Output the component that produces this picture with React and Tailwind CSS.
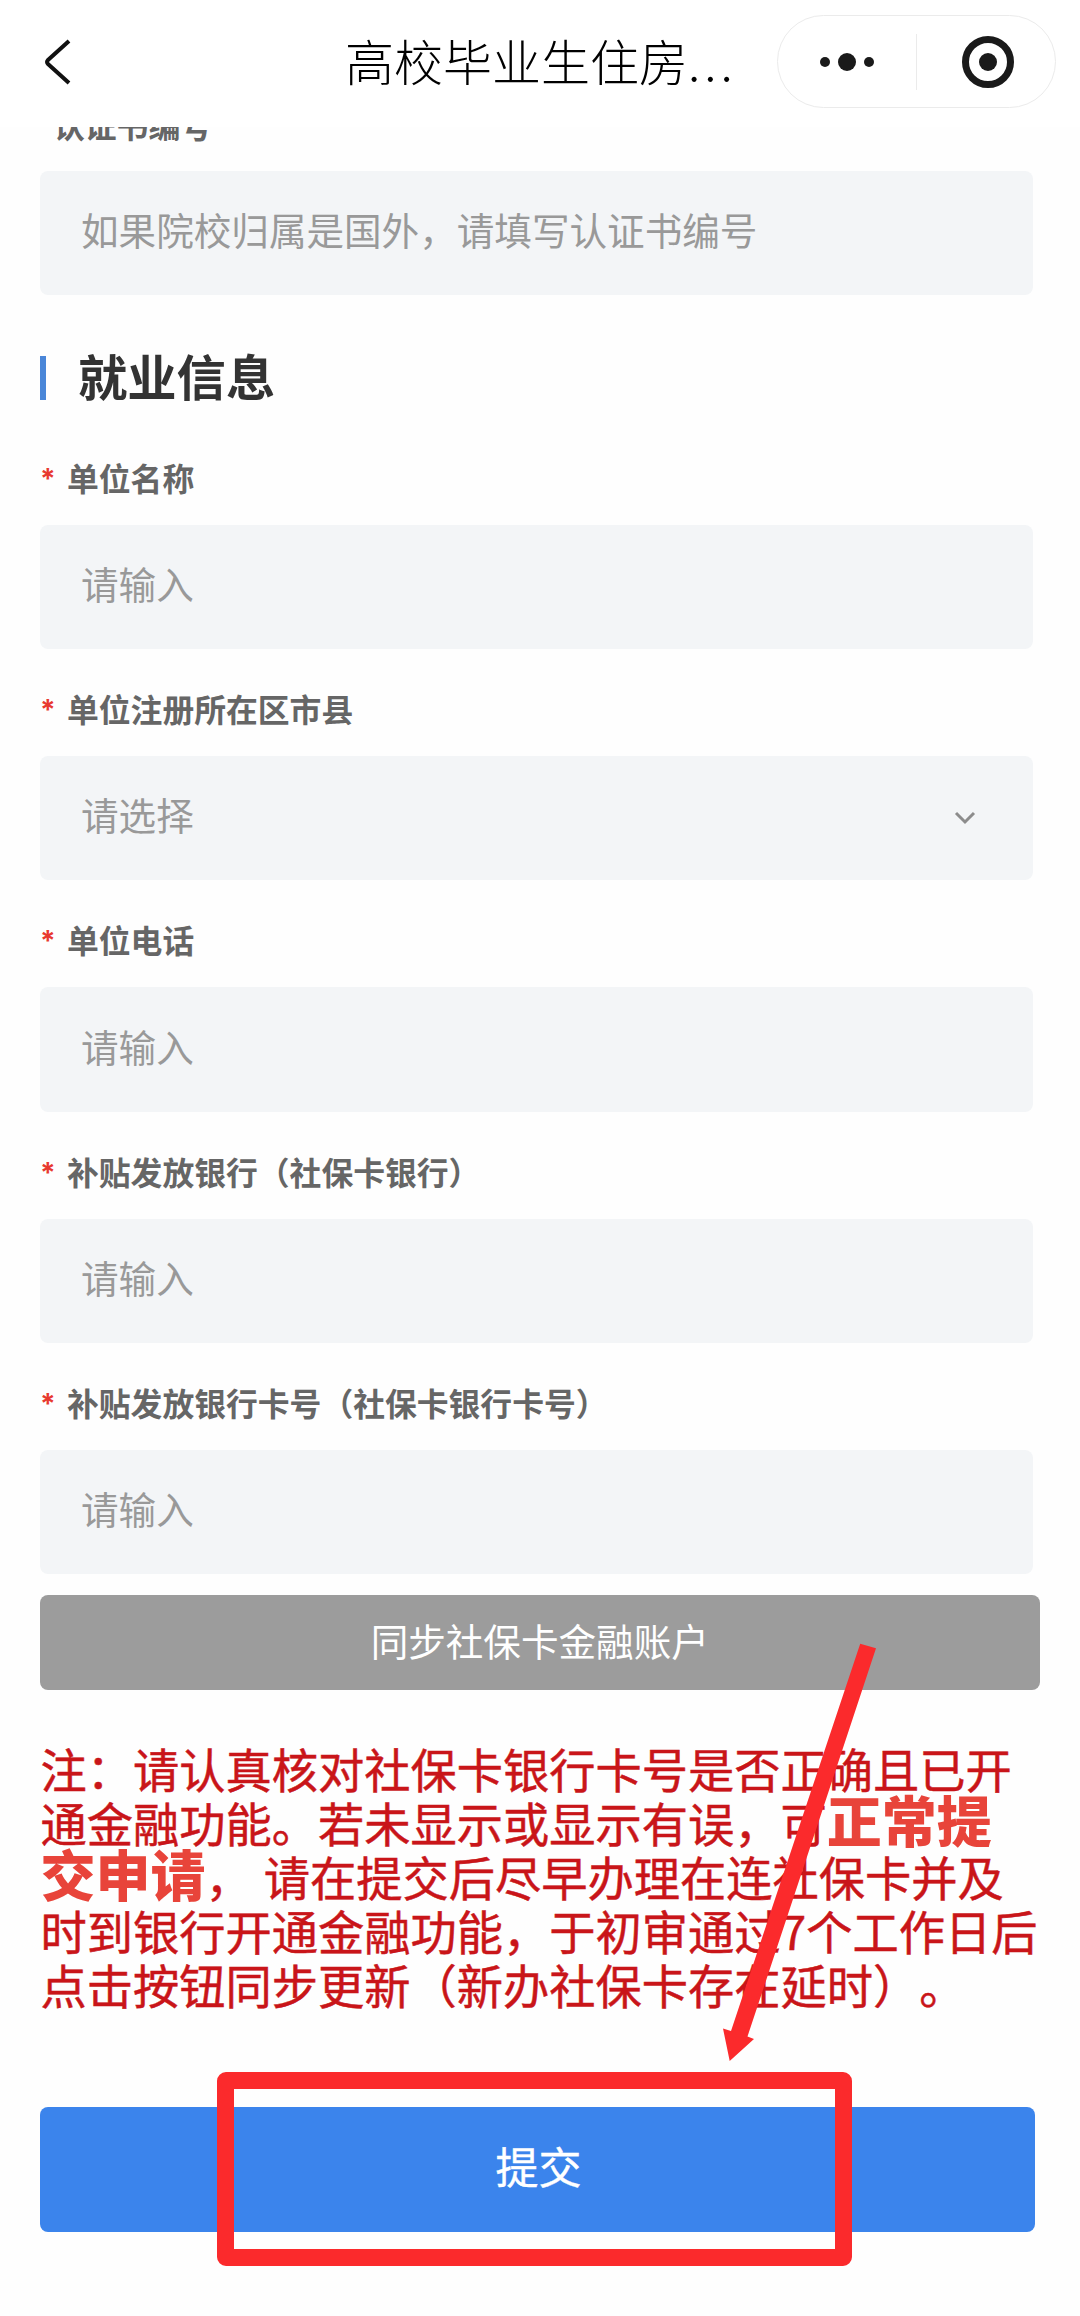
const fields = [
  { label: '单位名称', placeholder: '请输入' },
  { label: '单位注册所在区市县', placeholder: '请选择', select: true },
  { label: '单位电话', placeholder: '请输入' },
  { label: '补贴发放银行（社保卡银行）', placeholder: '请输入' },
  { label: '补贴发放银行卡号（社保卡银行卡号）', placeholder: '请输入' },
];

function NavBar() {
  return (
    <header className="flex h-[127px] shrink-0 items-start bg-white pl-[44px] pr-6">
      <svg className="mt-[38px] h-[48px] w-[28px]" viewBox="0 0 28 48" fill="none" stroke="#111" strokeWidth="4">
        <path d="M25 3 L4 22 Q2 24 4 26 L25 45" />
      </svg>
      <h1 className="ml-[273px] mt-[23px] w-[432px] whitespace-nowrap text-[49px] font-light leading-[74px] text-black">
        高校毕业生住房<span className="tracking-[4px]">...</span>
      </h1>
      <div className="mt-[15px] flex h-[93px] w-[279px] items-center rounded-full border border-[#ebebeb]">
        <div className="flex w-[138px] items-center justify-center gap-[8px]">
          <span className="size-[10px] rounded-full bg-[#1a1a1a]" />
          <span className="size-[18px] rounded-full bg-[#1a1a1a]" />
          <span className="size-[10px] rounded-full bg-[#1a1a1a]" />
        </div>
        <div className="h-[56px] w-px bg-[#ebebeb]" />
        <div className="flex flex-1 items-center justify-center pl-[4px]">
          <div className="flex size-[52px] items-center justify-center rounded-full border-[7px] border-[#1a1a1a]">
            <span className="size-[18px] rounded-full bg-[#1a1a1a]" />
          </div>
        </div>
      </div>
    </header>
  );
}

function InputBox({ placeholder, select }) {
  return (
    <div className="flex h-[124.3px] w-[992.5px] items-center justify-between rounded-lg bg-[#f3f5f7] pl-[41px] pr-[57px] text-[37.6px] leading-[56px] text-[#999]">
      <span className="-mt-[8px]">{placeholder}</span>
      {select && (
        <svg className="h-[14px] w-[22px]" viewBox="0 0 22 14" fill="none" stroke="#8c8c8c" strokeWidth="3">
          <path d="M2 2 L11 11 L20 2" />
        </svg>
      )}
    </div>
  );
}

function Field({ label, placeholder, select }) {
  return (
    <div>
      <div className="flex h-[107px] items-center pt-[11px] text-[31.8px] font-bold leading-[48px] text-[#666]">
        <span className="w-[27px] pt-[4px] font-['Inter',sans-serif] text-[28px] font-bold text-[#e8392f]">*</span>
        <span>{label}</span>
      </div>
      <InputBox placeholder={placeholder} select={select} />
    </div>
  );
}

// hand-drawn style arrow pointing at the submit button
function Arrow() {
  return (
    <svg className="pointer-events-none absolute left-[720px] top-[1640px]" width="160" height="424" viewBox="720 1640 160 424">
      <path
        d="M860.2 1643.7 L876 1648.3 L747.5 2036.5 L754 2039 L729.7 2061 L723 2028.5 L731 2031 Z"
        fill="#fb2a2c"
      />
    </svg>
  );
}

export default function App() {
  return (
    <div className="relative flex h-[2316px] w-[1080px] flex-col overflow-hidden bg-[#fefefe] font-['Noto_Sans_CJK_SC',sans-serif] [text-spacing-trim:space-all]">
      <NavBar />

      <main className="flex flex-col pl-[40px]">
        <div className="flex h-[44px] items-start overflow-hidden">
          <p className="-mt-[27px] pl-[13px] text-[31.8px] font-bold leading-[48px] text-[#666]">认证书编号</p>
        </div>
        <InputBox placeholder="如果院校归属是国外，请填写认证书编号" />

        <div className="mt-[45px] flex h-[76px] items-center">
          <div className="h-[44px] w-[6px] bg-[#4a86d8]" />
          <h2 className="ml-[32px] -mt-[7px] text-[49.3px] font-bold leading-[74px] text-[#333]">就业信息</h2>
        </div>

        <div className="mt-[1.5px] flex flex-col">
          {fields.map((f) => (
            <Field key={f.label} {...f} />
          ))}
        </div>

        <button className="mt-[20.7px] flex h-[95px] w-[999.5px] items-center justify-center rounded-lg bg-[#9c9c9c] pb-[5px] text-[37.6px] leading-[56px] text-white">
          同步社保卡金融账户
        </button>

        <div className="mt-[51px] w-[1030px] whitespace-nowrap pl-[0.5px] text-[46.26px] leading-[53.9px] text-[#c91519] [-webkit-text-stroke:0.5px]">
          <p className="h-[53.9px]">注：请认真核对社保卡银行卡号是否正确且已开</p>
          <p className="h-[53.9px]">
            通金融功能。若未显示或显示有误，可
            <b className="text-[55px] font-black leading-[0px] text-[#e8443a] [-webkit-text-stroke:0px]">正常提</b>
          </p>
          <p className="h-[53.9px]">
            <b className="text-[55px] font-black leading-[0px] text-[#e8443a] [-webkit-text-stroke:0px]">交申请</b>，
            <span className="ml-[12px]">请在提交后尽早办理在连社保卡并及</span>
          </p>
          <p className="h-[53.9px]">时到银行开通金融功能，于初审通过7个工作日后</p>
          <p className="h-[53.9px]">点击按钮同步更新（新办社保卡存在延时）。</p>
        </div>

        <div className="relative mt-[97px] w-[995px]">
          <button className="flex h-[125px] w-full items-center justify-center rounded-lg bg-[#3b84ec] pb-[10px] pl-[2px] text-[43px] leading-[64px] text-white [-webkit-text-stroke:0.4px]">
            提交
          </button>
          <div className="absolute -top-[35px] left-[176.5px] h-[194px] w-[635px] rounded-[9px] border-[17px] border-[#fb2a2c]" />
        </div>
      </main>

      <Arrow />
    </div>
  );
}
